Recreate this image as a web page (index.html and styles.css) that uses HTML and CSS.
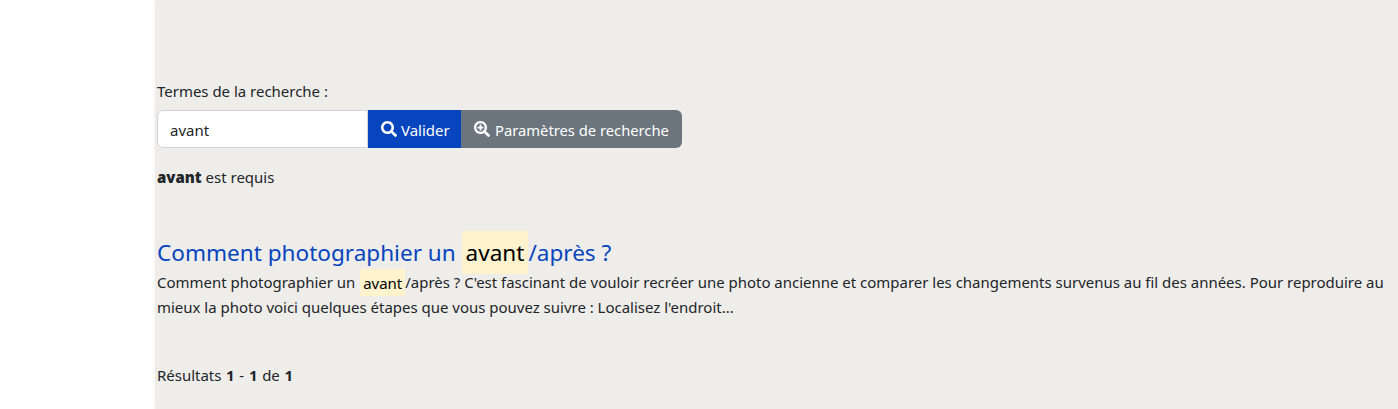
FILE: index.html
```html
<!DOCTYPE html>
<html lang="fr">
<head>
<meta charset="utf-8">
<title>Recherche</title>
<link rel="stylesheet" href="styles.css">
</head>
<body>
<div class="page">
  <aside class="sidebar"></aside>
  <main class="main">
    <form class="search">
      <label class="label" for="q">Termes de la recherche :</label>
      <div class="group">
        <input class="input" id="q" type="text" value="avant">
        <button class="btn btn-primary" type="button">
          <svg class="icon" viewBox="0 0 512 512"><path fill="currentColor" d="M505 442.700L405.300 343c-4.500-4.500-10.600-7-17-7H372c27.600-35.300 44-79.700 44-128C416 93.100 322.900 0 208 0S0 93.100 0 208s93.100 208 208 208c48.300 0 92.700-16.400 128-44v16.300c0 6.400 2.500 12.500 7 17l99.700 99.700c9.400 9.400 24.600 9.400 33.900 0l28.300-28.300c9.400-9.400 9.400-24.600.1-34zM208 336c-70.700 0-128-57.200-128-128 0-70.700 57.200-128 128-128 70.700 0 128 57.200 128 128 0 70.700-57.200 128-128 128z"/></svg>
          Valider
        </button>
        <button class="btn btn-secondary" type="button">
          <svg class="icon" viewBox="0 0 512 512"><path fill="currentColor" d="M304 192v32c0 6.600-5.400 12-12 12h-56v56c0 6.600-5.400 12-12 12h-32c-6.600 0-12-5.400-12-12v-56h-56c-6.600 0-12-5.400-12-12v-32c0-6.600 5.400-12 12-12h56v-56c0-6.600 5.400-12 12-12h32c6.600 0 12 5.400 12 12v56h56c6.600 0 12 5.400 12 12zm201 284.700L476.700 505c-9.400 9.400-24.600 9.400-33.900 0L343 405.300c-4.500-4.500-7-10.600-7-17V372c-35.300 27.600-79.700 44-128 44C93.100 416 0 322.900 0 208S93.100 0 208 0s208 93.100 208 208c0 48.300-16.400 92.700-44 128h16.300c6.400 0 12.500 2.500 17 7l99.700 99.700c9.300 9.400 9.300 24.600 0 34zM344 208c0-75.200-60.800-136-136-136S72 132.800 72 208s60.800 136 136 136 136-60.800 136-136z"/></svg>
          Paramètres de recherche
        </button>
      </div>
    </form>
    <p class="required"><strong class="term">avant</strong> est requis</p>
    <article class="result">
      <h2 class="result-title"><a href="#">Comment photographier un <mark class="hit hit-title">avant</mark>/après ?</a></h2>
      <p class="result-text">Comment photographier un <mark class="hit hit-text">avant</mark>/après ? C'est fascinant de vouloir recréer une photo ancienne et comparer les changements survenus au fil des années. Pour reproduire au mieux la photo voici quelques étapes que vous pouvez suivre : Localisez l'endroit...</p>
    </article>
    <p class="count">Résultats <b>1</b> - <b>1</b> de <b>1</b></p>
  </main>
</div>
</body>
</html>
```

FILE: styles.css
```css
* { box-sizing: border-box; }
html, body { margin: 0; height: 100%; overflow: hidden; }
body {
  font-family: "Noto Sans", "Open Sans", sans-serif;
  font-size: 14.97px;
  line-height: 25px;
  color: #212529;
  background: #fff;
}
.page { display: flex; height: 409px; }
.sidebar { width: 155px; flex: none; background: #fff; }
.main {
  flex: 1;
  background: #efedea;
  box-shadow: 0 0 3px rgba(0, 0, 0, .08);
  padding: 79px 8px 0 2px;
}
.label { display: block; height: 31px; line-height: 25px; }
.group { display: flex; height: 38px; width: 525px; }
.input {
  width: 211px;
  height: 38px;
  padding: 2px 12px 0;
  font: inherit;
  color: #212529;
  background: #fff;
  border: 1px solid #ced4da;
  border-radius: 6px 0 0 6px;
  outline: none;
}
.btn {
  display: flex;
  align-items: center;
  gap: 5px;
  height: 38px;
  padding: 2px 12px 0 13px;
  font: inherit;
  color: #fff;
  border: 0;
  white-space: nowrap;
}
.btn-primary { width: 93px; gap: 4px; background: #0645bd; }
.btn-secondary { width: 221px; background: #6c757d; border-radius: 0 6px 6px 0; font-size: 14.75px; }
.icon { width: 16px; height: 16px; flex: none; position: relative; top: -1px; }
.required { margin: 17px 0 0; }
.term { font-weight: 900; }
.result { margin-top: 48px; }
.result-title { margin: 0; font-size: 22.55px; font-weight: 400; line-height: 30px; }
.result-title a { color: #0645bd; text-decoration: none; }
.hit { background: #fff3cd; color: #000; }
.hit-title { padding: 6px 4px; }
.hit-text { padding: 3.500px 3px; margin-left: 1px; }
.result-text { margin: 2px 0 0; }
.count { margin: 43px 0 0; word-spacing: .8px; }
.count b { font-weight: 700; }
```
